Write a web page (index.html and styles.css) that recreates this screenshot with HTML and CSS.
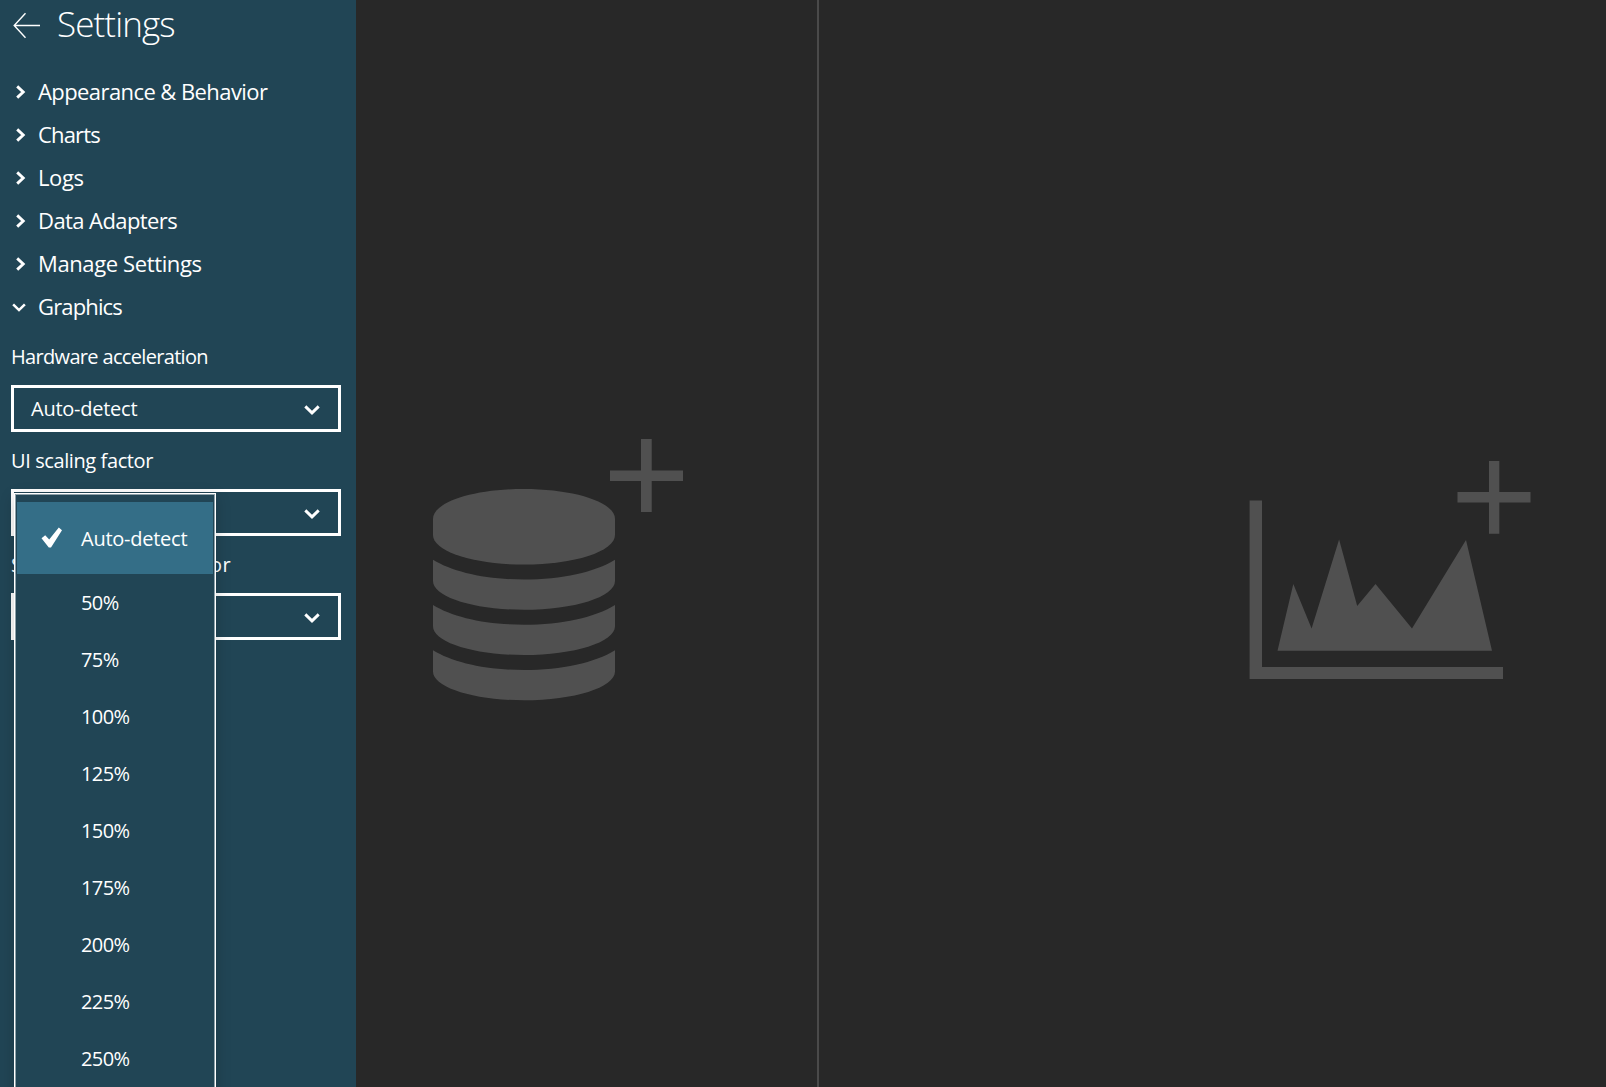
FILE: index.html
```html
<!DOCTYPE html>
<html lang="en">
<head>
<meta charset="utf-8">
<title>Settings</title>
<link rel="stylesheet" href="styles.css">
</head>
<body>
<svg class="defs" width="0" height="0" aria-hidden="true">
  <symbol id="chev-right" viewBox="0 0 10 14"><path d="M1.2 1.4 7.2 7 1.2 12.6" fill="none" stroke="#fff" stroke-width="2.9"/></symbol>
  <symbol id="chev-down" viewBox="0 0 16 10"><path d="M1.3 1.4 8 7.900 14.700 1.400" fill="none" stroke="#fff" stroke-width="2.900"/></symbol>
</svg>
<div class="app">
  <aside class="sidebar">
    <header class="header">
      <svg class="back" width="28" height="28" viewBox="0 0 28 28"><path d="M27 13.500H1.500M12.500 1.200 1.200 13.500 12.500 25.800" fill="none" stroke="#fff" stroke-width="1.400"/></svg>
      <h1 class="title">Settings</h1>
    </header>
    <nav class="sections">
      <div class="section"><svg class="arrow"><use href="#chev-right"/></svg><span class="wide-name">Appearance &amp; Behavior</span></div>
      <div class="section"><svg class="arrow"><use href="#chev-right"/></svg><span class="short-name">Charts</span></div>
      <div class="section"><svg class="arrow"><use href="#chev-right"/></svg><span>Logs</span></div>
      <div class="section"><svg class="arrow"><use href="#chev-right"/></svg><span class="wide-name">Data Adapters</span></div>
      <div class="section"><svg class="arrow"><use href="#chev-right"/></svg><span>Manage Settings</span></div>
      <div class="section"><svg class="arrow arrow-open"><use href="#chev-down"/></svg><span class="short-name">Graphics</span></div>
    </nav>
    <div class="fields">
      <div class="field">
        <div class="label">Hardware acceleration</div>
        <div class="select"><span class="value">Auto-detect</span><svg class="caret"><use href="#chev-down"/></svg></div>
      </div>
      <div class="field">
        <div class="label label-ui">UI scaling factor</div>
        <div class="select"><span></span><svg class="caret"><use href="#chev-down"/></svg>
          <div class="menu">
            <div class="option selected"><svg class="check" width="22" height="22" viewBox="0 0 22 22"><path d="M.5 11.200 4.200 8.200 8.200 12.600 17.800.6 21 3.200 10 20.600H7.800Z" fill="#fff"/></svg><span class="value">Auto-detect</span></div>
            <div class="option">50%</div>
            <div class="option">75%</div>
            <div class="option">100%</div>
            <div class="option">125%</div>
            <div class="option">150%</div>
            <div class="option">175%</div>
            <div class="option">200%</div>
            <div class="option">225%</div>
            <div class="option">250%</div>
          </div>
        </div>
      </div>
      <div class="field">
        <div class="label label-scroll">Scrollbar scaling factor</div>
        <div class="select"><span></span><svg class="caret"><use href="#chev-down"/></svg></div>
      </div>
    </div>
  </aside>
  <section class="pane data-pane">
    <svg width="250" height="264" viewBox="433 439 250 264" fill="#505050">
      <path d="M641 439h10.700v31.500H683V481h-31.300v31H641v-31h-31v-10.500h31z"/>
      <path d="M433 519C433 502 474 489 524 489s91 13 91 30v16c0 16.500-41 29.600-91 29.600S433 551.500 433 535z"/>
      <path id="disc" d="M433 559.700C453 572 486 579.500 524 579.500s71-7.500 91-19.800V581c0 16-41 28.800-91 28.800S433 597 433 581z"/>
      <use href="#disc" y="45.200"/>
      <use href="#disc" y="90.500"/>
    </svg>
  </section>
  <section class="pane chart-pane">
    <svg width="282" height="219" viewBox="1249 461 282 219" fill="#505050">
      <path d="M1489 461h10.300v31h31.200v10.500h-31.200v31.200H1489v-31.200h-31.500V492h31.500z"/>
      <path d="M1249.600 500.500H1262V667h241v12.100h-253.400z"/>
      <path d="M1277.500 650.700 1293.300 584l18.300 44.500 27.500-89 18.100 66.500 18.300-22 36.500 44.500 54-88.500 26 110.700z"/>
    </svg>
  </section>
</div>
</body>
</html>
```
FILE: styles.css
```css
* { box-sizing: border-box; }
body {
  margin: 0;
  background: #282828;
  color: #fff;
  font-family: "Open Sans", "Noto Sans", sans-serif;
  overflow: hidden;
}
.defs { display: block; }
.app { display: flex; width: 100%; height: 1087px; overflow: hidden; }
.sidebar { width: 356px; flex: none; background: #214555; }
.header { display: flex; height: 70px; padding-left: 13px; align-items: flex-start; }
.back { margin-top: 12px; }
.title {
  margin: 0 0 0 16px;
  font-size: 35px;
  line-height: 48px;
  font-weight: 300;
  letter-spacing: -0.9px;
}
.section {
  display: flex;
  align-items: center;
  height: 43px;
  font-size: 22px;
  line-height: 43px;
  letter-spacing: -0.38px;
  white-space: nowrap;
}
.wide-name { letter-spacing: -0.58px; }
.short-name { letter-spacing: -0.85px; }
.arrow { width: 10px; height: 14px; margin: 0 12px 0 16px; flex: none; }
.arrow-open { width: 14px; height: 9px; margin: 2px 12px 0 12px; }
.fields { padding: 15px 15px 0 11px; }
.field { height: 104px; }
.label {
  height: 42px;
  line-height: 27px;
  font-size: 20px;
  letter-spacing: -0.67px;
  white-space: nowrap;
}
.label-ui { letter-spacing: -0.4px; }
.label-scroll { letter-spacing: 0.38px; }
.select {
  position: relative;
  display: flex;
  align-items: center;
  justify-content: space-between;
  height: 47px;
  padding: 0 18px 0 17px;
  border: 3px solid #fff;
  font-size: 20px;
}
.value { letter-spacing: -0.25px; }
.caret { width: 16px; height: 10px; margin-top: 2px; }
.menu {
  position: absolute;
  left: 0;
  top: 1px;
  z-index: 1;
  width: 202px;
  height: 640px;
  padding: 8px 1px 0;
  background: #214555;
  border: 1px solid #fff;
  box-shadow: inset 0 0 0 1px #8fa2aa, 0 4px 14px rgba(0, 0, 0, 0.2);
}
.option {
  height: 57px;
  line-height: 57px;
  padding-left: 65px;
  letter-spacing: -0.6px;
}
.option.selected {
  display: flex;
  align-items: center;
  height: 72px;
  margin: 0 1px;
  padding-left: 24px;
  background: #346e87;
}
.selected .value { letter-spacing: -0.25px; }
.check { margin: -1px 18px 0 0; }
.pane { flex: none; }
.data-pane { width: 461px; padding: 439px 0 0 77px; }
.chart-pane { flex: 1; border-left: 2px solid #4a4a4a; padding: 461px 0 0 430px; }
.pane svg { display: block; }
```
